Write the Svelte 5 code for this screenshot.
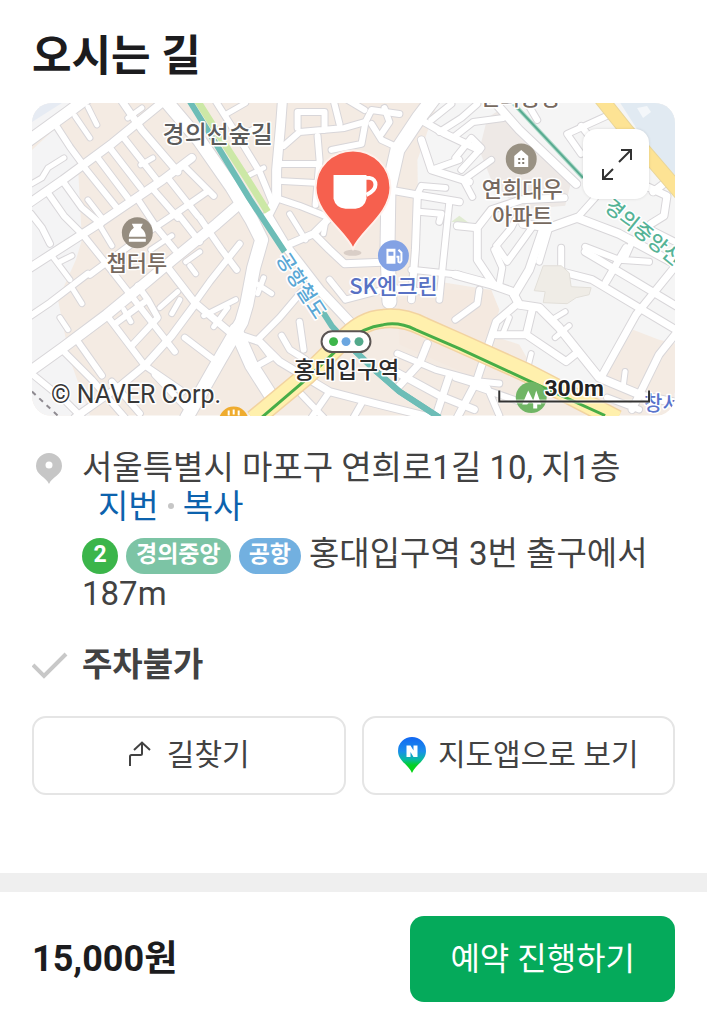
<script>
  const roads = [
    { w: 11, d: 'M24 144L67 113L90 96' },
    { w: 8, d: 'M24 207L63 180L113 143L168 98' },
    { w: 8, d: 'M24 272L97 225L163 180L192 158' },
    { w: 10, d: 'M24 376L63 348L107 315L147 282L173 260L217 224L240 204' },
    { w: 6, d: 'M207 192L177 213L147 233L128 247L90 275' },
    { w: 6, d: 'M88 274L50 303L28 318' },
    { w: 6, d: 'M57 127L70 147L84 166' },
    { w: 5, d: 'M75 116L90 138M88 107L97 125M48 168L64 158M48 168L42 178L28 186' },
    { w: 7, d: 'M120 98L142 130L178 172' },
    { w: 6, d: 'M84 167L117 208M97 157L128 198M110 148L141 188M124 138L157 180' },
    { w: 5, d: 'M141 165L153 158M128 118L142 108' },
    { w: 6, d: 'M48 193L64 216L83 235M64 183L82 208L101 224M31 214L42 228L50 244' },
    { w: 6, d: 'M83 235L111 270L150 320L175 352' },
    { w: 5, d: 'M52 256L70 280M100 226L112 246M88 200L102 218M60 262L72 256' },
    { w: 6, d: 'M137 198L157 228M152 188L178 218M168 178L198 216M184 166L214 196' },
    { w: 6, d: 'M157 228L175 250M178 214L200 242M200 218L222 250L237 270' },
    { w: 5, d: 'M151 250L172 236M186 262L200 252M190 266L196 274' },
    { w: 13, d: 'M162 96L200 141L232 187L252 220L262 240L254 268L247 305L242 322L220 360L187 418' },
    { w: 13, d: 'M236 330L252 366L275 402' },
    { w: 7, d: 'M168 268L195 303L232 334' },
    { w: 6, d: 'M195 303L210 282L240 244' },
    { w: 7, d: 'M195 305L172 336L145 366L122 385L75 418' },
    { w: 6, d: 'M145 366L114 325L107 316M145 366L183 392M114 325L148 300M131 347L158 318L148 300L138 286' },
    { w: 5, d: 'M160 308L178 292M172 314L180 300M124 310L131 322M204 316L236 300M214 327L228 308' },
    { w: 6, d: 'M78 342L102 376M62 350L92 380L125 418M34 376L66 402L82 418' },
    { w: 5, d: 'M60 318L68 330M72 288L82 304' },
    { w: 6, d: 'M155 375L190 412M112 382L140 414M214 360L185 338' },
    { w: 9, d: 'M283 98L281 125L277 170L277 198L268 216L286 246L320 290L350 322' },
    { w: 6, d: 'M214 98L238 136L260 172L274 206' },
    { w: 5, d: 'M225 115L246 103M238 137L256 128M250 175L264 168' },
    { w: 6, d: 'M298 128L298 112L325 112L325 130M284 146L300 132L345 128L366 122L372 110L400 114' },
    { w: 6, d: 'M278 164L316 164M278 181L316 183M276 198L300 206L330 218M318 136L320 160L316 205' },
    { w: 6, d: 'M334 100L340 124M366 122L362 144L332 150M372 124L382 140L395 146' },
    { w: 6, d: 'M345 98L365 110M385 108L390 122L382 134' },
    { w: 7, d: 'M286 246L314 234L330 250L345 264L395 262M314 234L330 218' },
    { w: 5, d: 'M290 214L306 240M328 212L324 234M254 282L272 294M264 278L258 294' },
    { w: 14, d: 'M436 96L420 117L398 150L389 190L388 250L390 302' },
    { w: 7, d: 'M418 118L446 134L480 150M422 140L432 170L470 182' },
    { w: 6, d: 'M432 120L452 104M440 132L462 118L478 104M432 170L460 160' },
    { w: 7, d: 'M390 190L418 195L460 202M418 195L416 250L412 300' },
    { w: 6, d: 'M418 194L422 186L446 188M419 212L442 214L440 222M450 202L444 260L440 300' },
    { w: 6, d: 'M412 270L460 275M346 300L392 288L440 294M346 300L330 280' },
    { w: 7, d: 'M236 334L260 342L280 362L330 392L376 404L440 420' },
    { w: 6, d: 'M260 342L272 358L254 368M258 340L280 318L302 292M282 336L290 350L306 360M300 322L304 350' },
    { w: 6, d: 'M302 395L324 418M330 392L312 418M362 404L354 418M398 354L436 370L480 382L500 384' },
    { w: 7, d: 'M428 344L420 364L400 386M396 372L440 396L475 410M450 376L436 418' },
    { w: 8, d: 'M490 96L520 130L577 184' },
    { w: 6, d: 'M456 136L474 122L504 118M456 158L472 138L482 148L462 170M464 180L492 160M464 180L473 197M525 98L538 120' },
    { w: 6, d: 'M612 114L590 124L568 134L582 154M582 126L596 144' },
    { w: 7, d: 'M458 226L478 228L478 260L494 284M478 228L492 210L522 200L565 198' },
    { w: 6, d: 'M497 246L512 228L520 212M497 246L508 262L524 240L534 226' },
    { w: 8, d: 'M524 224L550 228L578 218L620 234L676 264' },
    { w: 6, d: 'M578 218L596 198M550 228L540 262M586 247L620 260L650 262M634 240L626 258' },
    { w: 7, d: 'M640 183L668 196L665 216L652 224M654 192L670 180' },
    { w: 8, d: 'M456 275L493 285L513 292L520 305L540 308L560 328L600 378L643 396L680 404' },
    { w: 8, d: 'M545 226L530 270L515 295' },
    { w: 6, d: 'M495 250L503 268L500 285M480 290L478 304L456 320M562 248L562 270' },
    { w: 7, d: 'M562 272L593 280L680 332M586 252L630 278L680 308' },
    { w: 7, d: 'M627 248L607 282M680 262L637 315L603 376M680 330L660 355L633 410' },
    { w: 7, d: 'M517 305L497 322L477 382L458 418M497 335L527 335L567 362L577 354M533 310L527 335' },
    { w: 5, d: 'M504 333L510 318M556 318L566 312M556 338L570 326M532 354L526 378M624 388L626 372' },
    { w: 6, d: 'M456 378L488 388L500 416M474 386L520 402M608 398L640 410M648 228L680 244' }
  ];

  const rail = 'M188 98L220 150L250 199L285 252M323 312L332 326L350 346L377 372L400 392L440 418';
  const avenue = 'M254 420L307 376L342 342Q362 320 384 319Q404 317 424 327L460 343L527 373L618 420';
</script>

<main class="page">
  <section class="directions" aria-labelledby="way">
    <h1 id="way">오시는 길</h1>

    <div class="map">
      <svg class="canvas" viewBox="32 103 644 313" preserveAspectRatio="xMidYMid slice" role="img" aria-label="홍대입구역">
        <rect x="32" y="103" width="644" height="313" fill="#f4ebe3" />
        <path d="M32 103H78L32 140ZM32 150L58 126L78 165L82 240L76 260L58 300L70 360L90 416H32Z" fill="#f4f4f5" />
        <path d="M440 98H680V345L660 340L634 330L600 386L540 380L520 345L490 335L500 310L490 290L440 282L420 290L418 160Z" fill="#f5f5f5" />
        <path d="M488 118L500 110L572 182L566 206L520 210L492 180L480 150Z" fill="#eee9e6" />
        <path d="M440 290L492 290L500 310L480 380L400 345L398 300Z" fill="#f4e9e0" />
        <path d="M32 103L62 103L32 122Z" fill="#e6ebf3" />
        <path d="M618 98H680V184L650 148Z" fill="#e1eaf2" />
        <path d="M638 108L648 106L652 112L644 118Z" fill="#f4f7fa" />
        <path d="M452 222L472 225L460 216Z" fill="#e0ebd2" />

        <g fill="none" stroke="#d8d6d9" stroke-linecap="round" stroke-linejoin="round">
          {#each roads as road}<path d={road.d} stroke-width={road.w + 2} />{/each}
        </g>
        <g fill="none" stroke="#fff" stroke-linecap="round" stroke-linejoin="round">
          {#each roads as road}<path d={road.d} stroke-width={road.w} />{/each}
        </g>
        <path d="M544 266L562 266L570 273L572 287L592 288L590 295L577 298L568 304L544 303L546 292L535 291Z" fill="#efece6" stroke="#e2dfd9" />

        <g fill="none" stroke-linejoin="round">
          <path d="M196 98L228 149L250 183L268 212" stroke="#cce8a6" stroke-width="7" />
          <path d={rail} stroke="#6dbdb7" stroke-width="6" />
          <path d="M509 98L584 178" stroke="#a8d8c5" stroke-width="4" />
          <path d="M509 98L584 178" stroke="#58aa91" stroke-width="2" />
          <path d="M600 96L627 130L653 160L682 194" stroke="#e9d69b" stroke-width="15" />
          <path d="M600 96L627 130L653 160L682 194" stroke="#fde394" stroke-width="13" />
          <path d={avenue} stroke="#f2d3a0" stroke-width="20" />
          <path d={avenue} stroke="#fff0ad" stroke-width="17" />
          <path d="M262 418L304 382L344 344Q364 327 384 325Q400 322 416 330L460 349L527 380L606 416" stroke="#48ad47" stroke-width="3" />
          <path d="M350 346L377 372L400 392L440 418" stroke="#6dbdb7" stroke-width="6" />
          <path d="M32 392L62 420" stroke="#8e8a90" stroke-width="2" stroke-dasharray="5 5" />
        </g>

        <g class="place">
          <text x="218" y="143" class="dark">경의선숲길</text>
          <text x="137" y="271">챕터투</text>
          <text x="523" y="197">연희대우</text>
          <text x="523" y="224">아파트</text>
          <text x="394" y="294" class="blue">SK엔크린</text>
          <text x="347" y="378" class="station">홍대입구역</text>
          <text x="521" y="105">연희중앙</text>
        </g>
        <text class="line teal" transform="translate(604 209) rotate(39)">경의중앙선</text>
        <text class="line sky" transform="translate(276 259) rotate(57)">공항철도</text>
        <text class="line navy" x="645" y="411">창서</text>

        <circle cx="137.500" cy="233" r="15.500" fill="#968d80" />
        <path d="M132 224H143L141 228Q146 232 146 237H129Q129 232 134 228ZM129 239H146V242H129Z" fill="#fff" />
        <circle cx="522" cy="159" r="15.500" fill="#999183" />
        <path d="M522 150l7 6v11h-14v-11Z" fill="#fff" />
        <path d="M519 158h2v2h-2Zm4 0h2v2h-2Zm-4 4h2v2h-2Zm4 0h2v2h-2Z" fill="#827b70" />
        <circle cx="394" cy="256" r="15.500" fill="#83a2e4" />
        <path d="M387 249h9v15h-9Z" fill="#fff" />
        <path d="M389 252h5v4h-5Z" fill="#83a2e4" />
        <path d="M397 257h2v5q2 2 3-1v-8l-3-3" fill="none" stroke="#fff" stroke-width="2" />
        <circle cx="234" cy="422" r="15" fill="#efac2f" />
        <path d="M229 416v-5m5 4v-5m5 6v-5" stroke="#fff" stroke-width="2" />
        <circle cx="532" cy="398" r="15.500" fill="#70b565" />
        <path d="M523 405L529 391L534 401L537 391L542 405H538V409H534V404L531 401L528 405Z" fill="#fff" />

        <ellipse cx="353" cy="253" rx="9" ry="3" fill="#d9cec7" />
        <path d="M353.500 249C346 231 316 214 316 188A37.500 37.500 0 0 1 391 188C391 214 361 231 353.500 249Z" fill="#f6604e" stroke="#fff0eb" stroke-width="2" />
        <path d="M334 175H367V199Q365 208 356 209H346Q336 208 334 199Z" fill="#fff" />
        <path d="M366 178H370Q376 179 376 185Q376 191 367 195" fill="none" stroke="#fff" stroke-width="4" />

        <rect x="322" y="331.500" width="49" height="21" rx="10.500" fill="#fff" stroke="#5b5553" stroke-width="2" />
        <circle cx="334" cy="342" r="4.500" fill="#3db54a" />
        <circle cx="346.500" cy="342" r="4.500" fill="#6ba6e0" />
        <circle cx="359.500" cy="342" r="4.500" fill="#53a98b" />

        <text class="credit" x="51" y="403">© NAVER Corp.</text>
        <path d="M500 391V402H650V391" fill="none" stroke="#fff" stroke-width="4" opacity=".6" />
        <path d="M500 391V402H650V391" fill="none" stroke="#333" stroke-width="2" />
        <text class="scale" x="575" y="396">300m</text>
      </svg>
      <button class="expand" type="button" aria-label="지도 확대">
        <svg width="34" height="34" viewBox="0 0 34 34" fill="none" stroke="#333" stroke-width="2">
          <path d="M20 15L32 3M22 3H32V13M14 22L4 32M4 22V32H14" />
        </svg>
      </button>
    </div>

    <div class="row">
      <svg class="mark" width="36" height="39" viewBox="0 0 36 39">
        <path d="M17 36C14 29 4 27 4 18A13 13 0 0 1 30 18C30 27 20 29 17 36Z" fill="#c6c6c6" />
        <circle cx="17" cy="17" r="3.500" fill="#fff" />
      </svg>
      <div class="details">
        <p>서울특별시 마포구 연희로1길 10, 지1층</p>
        <p class="links"><a href="#lot">지번</a><span class="dot"></span><a href="#copy">복사</a></p>
        <p class="exit"><span class="badge two">2</span><span class="badge gyeongui">경의중앙</span><span class="badge airport">공항</span>홍대입구역 3번 출구에서 187m</p>
      </div>
    </div>

    <div class="row parking">
      <svg class="mark" width="36" height="39" viewBox="0 0 36 39" fill="none" stroke="#c8c8c8" stroke-width="4">
        <path d="M1 20L12 31L34 9" />
      </svg>
      <strong>주차불가</strong>
    </div>

    <div class="actions">
      <button type="button">
        <svg width="24" height="30" viewBox="0 0 24 30" fill="none" stroke="#424242" stroke-width="2">
          <path d="M2 29V19.500Q2 18 3.500 18H12.500Q14 18 14 16.500V6M6 13L14 5.500L22 13" />
        </svg>
        길찾기
      </button>
      <button class="app" type="button">
        <svg width="28" height="42" viewBox="0 0 28 42">
          <defs>
            <linearGradient id="pin" x1="0" y1="0" x2="0" y2="1">
              <stop offset="0" stop-color="#1267f2" />
              <stop offset=".4" stop-color="#1b8eea" />
              <stop offset=".62" stop-color="#08b9a4" />
              <stop offset=".78" stop-color="#04cf28" />
              <stop offset="1" stop-color="#05d60c" />
            </linearGradient>
          </defs>
          <path d="M14 42C11 34 0 30 0 20A14 14 0 0 1 28 20C28 30 17 34 14 42Z" fill="url(#pin)" />
          <path d="M8.500 26V14.500H12.500L15.500 19.500V14.500H19.500V26H15.500L12.500 21V26Z" fill="#fff" />
        </svg>
        지도앱으로 보기
      </button>
    </div>
  </section>

  <footer>
    <strong>15,000원</strong>
    <button type="button">예약 진행하기</button>
  </footer>
</main>

<style>
  :global(body) {
    margin: 0;
    background: #fff;
  }

  .page {
    font-family: Roboto, 'Noto Sans CJK KR', sans-serif;
    color: #424242;
  }

  .directions {
    padding: 25px 32px 78px;
    border-bottom: 19px solid #efefef;
  }

  h1 {
    margin: 0 0 15px;
    font-size: 43px;
    line-height: 63px;
    font-weight: 700;
    color: #1c1c1e;
  }

  .map {
    position: relative;
    border-radius: 20px;
    overflow: hidden;
  }

  .canvas {
    display: block;
    width: 100%;
    height: auto;
  }

  .canvas text {
    paint-order: stroke;
    stroke: #fff;
    stroke-width: 3px;
    stroke-linejoin: round;
  }

  .place text {
    font: 500 22px 'Noto Sans CJK KR', sans-serif;
    text-anchor: middle;
    fill: #76695f;
  }

  .place .dark {
    font-size: 24px;
    fill: #5b5b5b;
  }

  .place .blue {
    fill: #5871c4;
  }

  .place .station {
    font-size: 23px;
    fill: #2b2b2b;
  }

  .line {
    font: 500 20px 'Noto Sans CJK KR', sans-serif;
  }

  .teal {
    fill: #55b396;
  }

  .sky {
    fill: #5aa7d5;
  }

  .navy {
    fill: #5a74cc;
  }

  .credit {
    font: 400 25px Roboto, sans-serif;
    fill: #383838;
  }

  .scale {
    font: 700 23px Roboto, sans-serif;
    text-anchor: middle;
    fill: #222;
  }

  button {
    display: flex;
    align-items: center;
    justify-content: center;
    padding: 0;
    font-family: inherit;
    color: inherit;
    cursor: pointer;
  }

  .expand {
    position: absolute;
    top: 26px;
    right: 26px;
    width: 66px;
    height: 70px;
    border: 0;
    border-radius: 14px;
    background: #fff;
    box-shadow: 0 0 3px rgb(0 0 0 / 12%);
  }

  .row {
    display: flex;
    gap: 14px;
    margin-top: 32px;
    font-size: 33px;
    line-height: 39px;
  }

  .mark {
    flex: none;
  }

  .details p {
    margin: 0;
  }

  .details .links {
    display: flex;
    align-items: center;
    gap: 9px;
    padding-left: 16px;
  }

  a {
    color: #0c62ad;
    text-decoration: none;
  }

  .dot {
    width: 6px;
    height: 6px;
    border-radius: 50%;
    background: #c6c6c6;
  }

  .details .exit {
    margin-top: 8px;
  }

  .badge {
    display: inline-block;
    box-sizing: border-box;
    height: 36px;
    margin-right: 8px;
    padding: 0 10px;
    border-radius: 18px;
    font-size: 23px;
    line-height: 34px;
    font-weight: 700;
    color: #fff;
    text-align: center;
    vertical-align: middle;
  }

  .two {
    width: 36px;
    background: #3bb54a;
  }

  .gyeongui {
    background: #7cc4a5;
  }

  .airport {
    background: #72b0e0;
  }

  .parking strong {
    font-weight: 700;
  }

  .actions {
    display: grid;
    grid-template-columns: 1fr 1fr;
    gap: 16px;
    margin-top: 32px;
  }

  .actions button {
    gap: 15px;
    height: 79px;
    padding-bottom: 6px;
    border: 2px solid #e5e5e5;
    border-radius: 14px;
    background: #fff;
    font-size: 30px;
  }

  .actions .app {
    gap: 12px;
  }

  footer {
    display: flex;
    align-items: center;
    justify-content: space-between;
    padding: 24px 32px 22px;
  }

  footer strong {
    padding-bottom: 8px;
    font-size: 36px;
    color: #1c1c1e;
  }

  footer button {
    padding: 0 40px 6px;
    height: 86px;
    border: 0;
    border-radius: 14px;
    background: #05aa5b;
    font-size: 32px;
    color: #fff;
  }
</style>
